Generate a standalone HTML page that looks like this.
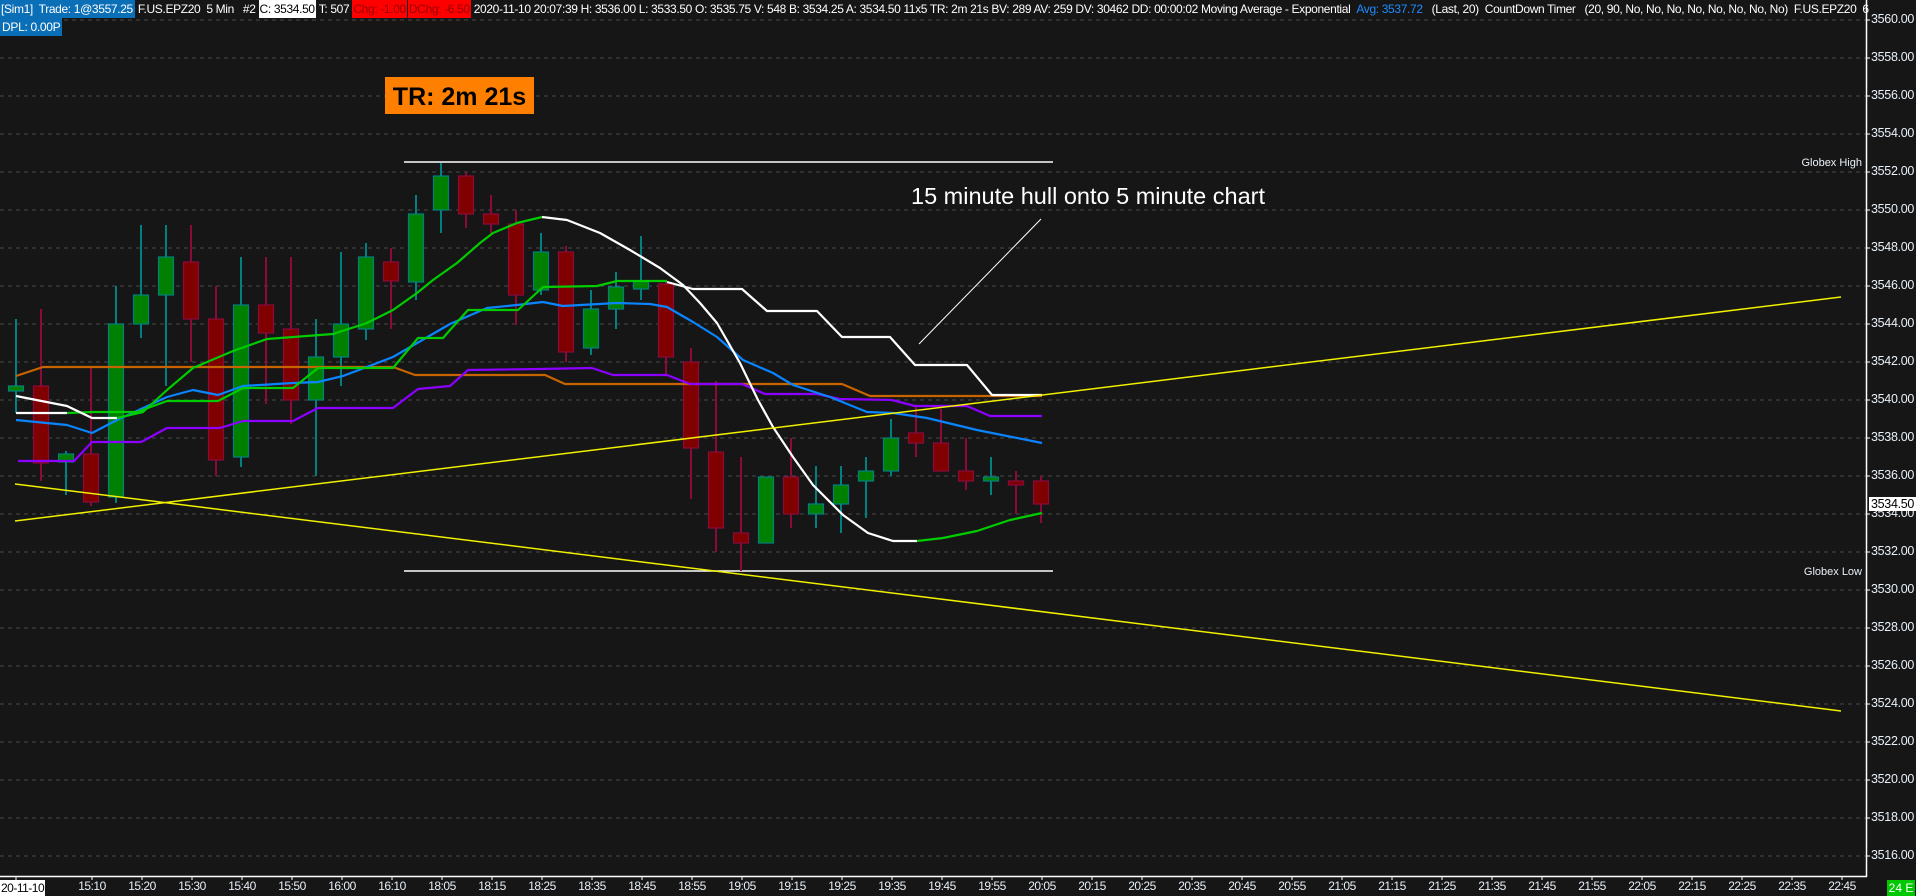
<!DOCTYPE html>
<html><head><meta charset="utf-8"><style>
html,body{margin:0;padding:0;background:#161616;width:1916px;height:896px;overflow:hidden;font-family:"Liberation Sans",sans-serif}
#hdr{position:absolute;left:0;top:0;height:18px;width:1916px;white-space:nowrap;overflow:hidden;font-size:12px;line-height:18px;color:#fff;letter-spacing:-0.35px}
#hdr span{display:inline-block}
#dpl{position:absolute;left:0;top:18px;height:18px;line-height:18px;font-size:12px;color:#fff;background:#0a6fb7;padding:0 2px;letter-spacing:-0.3px}
.pl{position:absolute;left:1871px;font-size:12.5px;color:#e8f0f8;letter-spacing:-0.3px}
.tl{position:absolute;top:879px;font-size:12px;color:#e8f0f8;letter-spacing:-0.5px;transform:translateX(-50%)}
</style></head><body>
<svg width="1916" height="896" style="position:absolute;left:0;top:0">
<g stroke="#4a4a4a" stroke-width="1" stroke-dasharray="4,4">
<line x1="0" y1="20" x2="1866" y2="20"/><line x1="0" y1="58" x2="1866" y2="58"/><line x1="0" y1="96" x2="1866" y2="96"/><line x1="0" y1="134" x2="1866" y2="134"/><line x1="0" y1="172" x2="1866" y2="172"/><line x1="0" y1="210" x2="1866" y2="210"/><line x1="0" y1="248" x2="1866" y2="248"/><line x1="0" y1="286" x2="1866" y2="286"/><line x1="0" y1="324" x2="1866" y2="324"/><line x1="0" y1="362" x2="1866" y2="362"/><line x1="0" y1="400" x2="1866" y2="400"/><line x1="0" y1="438" x2="1866" y2="438"/><line x1="0" y1="476" x2="1866" y2="476"/><line x1="0" y1="514" x2="1866" y2="514"/><line x1="0" y1="552" x2="1866" y2="552"/><line x1="0" y1="590" x2="1866" y2="590"/><line x1="0" y1="628" x2="1866" y2="628"/><line x1="0" y1="666" x2="1866" y2="666"/><line x1="0" y1="704" x2="1866" y2="704"/><line x1="0" y1="742" x2="1866" y2="742"/><line x1="0" y1="780" x2="1866" y2="780"/><line x1="0" y1="818" x2="1866" y2="818"/><line x1="0" y1="856" x2="1866" y2="856"/>
</g>
<!-- Globex lines -->
<line x1="404" y1="162" x2="1053" y2="162" stroke="#fff" stroke-width="1.5"/>
<line x1="404" y1="571" x2="1053" y2="571" stroke="#fff" stroke-width="1.5"/>
<!-- candles -->
<g stroke-width="2">
<g stroke="#008080">
<line x1="16" y1="319" x2="16" y2="413"/><line x1="66" y1="451" x2="66" y2="495"/><line x1="116" y1="286" x2="116" y2="503"/><line x1="141" y1="225" x2="141" y2="338"/><line x1="166" y1="225" x2="166" y2="386"/><line x1="241" y1="257" x2="241" y2="467"/><line x1="316" y1="319" x2="316" y2="476"/><line x1="341" y1="252" x2="341" y2="386"/><line x1="366" y1="243" x2="366" y2="340"/><line x1="416" y1="195" x2="416" y2="300"/><line x1="441" y1="163" x2="441" y2="233"/><line x1="541" y1="233" x2="541" y2="295"/><line x1="591" y1="290" x2="591" y2="355"/><line x1="616" y1="272" x2="616" y2="329"/><line x1="641" y1="236" x2="641" y2="300"/><line x1="766" y1="477" x2="766" y2="543"/><line x1="816" y1="466" x2="816" y2="528"/><line x1="841" y1="466" x2="841" y2="533"/><line x1="866" y1="457" x2="866" y2="518"/><line x1="891" y1="419" x2="891" y2="476"/><line x1="991" y1="457" x2="991" y2="495"/>
</g>
<g stroke="#8b0a3c">
<line x1="41" y1="309" x2="41" y2="481"/><line x1="91" y1="367" x2="91" y2="506"/><line x1="191" y1="225" x2="191" y2="362"/><line x1="216" y1="286" x2="216" y2="476"/><line x1="266" y1="257" x2="266" y2="404"/><line x1="291" y1="257" x2="291" y2="424"/><line x1="391" y1="248" x2="391" y2="329"/><line x1="466" y1="172" x2="466" y2="228"/><line x1="491" y1="195" x2="491" y2="233"/><line x1="516" y1="210" x2="516" y2="325"/><line x1="566" y1="246" x2="566" y2="362"/><line x1="666" y1="282" x2="666" y2="374"/><line x1="691" y1="348" x2="691" y2="499"/><line x1="716" y1="381" x2="716" y2="552"/><line x1="741" y1="457" x2="741" y2="571"/><line x1="791" y1="438" x2="791" y2="528"/><line x1="916" y1="407" x2="916" y2="457"/><line x1="941" y1="409" x2="941" y2="471"/><line x1="966" y1="438" x2="966" y2="490"/><line x1="1016" y1="471" x2="1016" y2="514"/><line x1="1041" y1="476" x2="1041" y2="523"/>
</g>
</g>
<g fill="#008000" stroke="#008080" stroke-width="1.2">
<rect x="8.5" y="386" width="15" height="5"/><rect x="58.5" y="454" width="15" height="8"/><rect x="108.5" y="324" width="15" height="173"/><rect x="133.5" y="295" width="15" height="29"/><rect x="158.5" y="257" width="15" height="38"/><rect x="233.5" y="305" width="15" height="152"/><rect x="308.5" y="357" width="15" height="43"/><rect x="333.5" y="324" width="15" height="33"/><rect x="358.5" y="257" width="15" height="72"/><rect x="408.5" y="214" width="15" height="68"/><rect x="433.5" y="176" width="15" height="34"/><rect x="533.5" y="252" width="15" height="38"/><rect x="583.5" y="309" width="15" height="39"/><rect x="608.5" y="287" width="15" height="22"/><rect x="633.5" y="281" width="15" height="8"/><rect x="758.5" y="477" width="15" height="66"/><rect x="808.5" y="504" width="15" height="10"/><rect x="833.5" y="485" width="15" height="19"/><rect x="858.5" y="471" width="15" height="10"/><rect x="883.5" y="438" width="15" height="33"/><rect x="983.5" y="477" width="15" height="4"/>
</g>
<g fill="#800000" stroke="#8b0a3c" stroke-width="1.2">
<rect x="33.5" y="386" width="15" height="77"/><rect x="83.5" y="454" width="15" height="48"/><rect x="183.5" y="262" width="15" height="57"/><rect x="208.5" y="319" width="15" height="141"/><rect x="258.5" y="305" width="15" height="28"/><rect x="283.5" y="329" width="15" height="71"/><rect x="383.5" y="262" width="15" height="19"/><rect x="458.5" y="176" width="15" height="38"/><rect x="483.5" y="214" width="15" height="10"/><rect x="508.5" y="224" width="15" height="71"/><rect x="558.5" y="252" width="15" height="100"/><rect x="658.5" y="284" width="15" height="73"/><rect x="683.5" y="362" width="15" height="86"/><rect x="708.5" y="452" width="15" height="76"/><rect x="733.5" y="533" width="15" height="10"/><rect x="783.5" y="477" width="15" height="37"/><rect x="908.5" y="433" width="15" height="10"/><rect x="933.5" y="443" width="15" height="28"/><rect x="958.5" y="471" width="15" height="10"/><rect x="1008.5" y="481" width="15" height="4"/><rect x="1033.5" y="481" width="15" height="23"/>
</g>
<!-- indicator lines -->
<g fill="none" stroke-width="2.2" stroke-linejoin="round">
<polyline stroke="#c86400" points="16,376 43,367 393,367 415,375 545,375 565,384 842,384 870,396 1042,396"/>
<polyline stroke="#8c00ff" points="18,461 74,461 92,442 141,442 145,440 167,428 220,428 243,421 293,421 318,408 393,408 418,389 450,386 468,370 540,369 592,368 613,375 667,375 690,384 742,384 765,394 817,394 840,399 892,400 915,406 967,406 990,416 1042,416"/>
<polyline stroke="#0a84ff" points="16,420 67,425 92,433 117,420 167,397 193,390 218,395 243,386 293,383 318,382 343,376 393,357 450,324 487,308 517,305 543,302 563,306 617,303 650,304 667,307 693,322 717,337 743,360 773,373 793,385 830,397 867,412 893,413 927,418 977,430 1042,443"/>
<polyline stroke="#00cc00" points="67,413 93,412 137,412 167,401 218,401 243,388 293,388 318,368 393,368 418,338 443,338 450,330 468,310 518,310 543,287 597,286 617,281 667,281"/>
<polyline stroke="#fff" points="667,282 693,289 742,289 767,311 817,311 842,337 890,337 915,365 967,365 992,395 1042,395"/>
<polyline stroke="#fff" points="16,413 67,413"/>
<polyline stroke="#fff" points="16,396 67,406 92,418 117,418"/>
<polyline stroke="#00cc00" points="117,418 143,412 167,390 193,368 233,351 267,339 333,334 367,323 393,310 417,293 433,280 457,263 480,243 493,233 517,223 542,217"/>
<polyline stroke="#fff" points="542,217 567,220 600,233 630,250 660,268 683,285 700,303 717,323 740,363 758,400 773,427 793,457 813,485 843,515 868,533 893,541 917,541"/>
<polyline stroke="#00cc00" points="917,541 943,538 977,531 1010,520 1042,513"/>
</g>
<line x1="15" y1="521" x2="1841" y2="297" stroke="#f0f000" stroke-width="1.5"/>
<line x1="15" y1="484" x2="1841" y2="711" stroke="#f0f000" stroke-width="1.5"/>
<line x1="1041" y1="219" x2="919" y2="344" stroke="#fff" stroke-width="1"/>
<!-- axes -->
<line x1="1866.5" y1="0" x2="1866.5" y2="877" stroke="#fff" stroke-width="1.5"/>
<line x1="0" y1="876.5" x2="1867" y2="876.5" stroke="#fff" stroke-width="1.5"/>
<g stroke="#fff" stroke-width="1">
<line x1="1866" y1="20" x2="1870" y2="20"/><line x1="1866" y1="58" x2="1870" y2="58"/><line x1="1866" y1="96" x2="1870" y2="96"/><line x1="1866" y1="134" x2="1870" y2="134"/><line x1="1866" y1="172" x2="1870" y2="172"/><line x1="1866" y1="210" x2="1870" y2="210"/><line x1="1866" y1="248" x2="1870" y2="248"/><line x1="1866" y1="286" x2="1870" y2="286"/><line x1="1866" y1="324" x2="1870" y2="324"/><line x1="1866" y1="362" x2="1870" y2="362"/><line x1="1866" y1="400" x2="1870" y2="400"/><line x1="1866" y1="438" x2="1870" y2="438"/><line x1="1866" y1="476" x2="1870" y2="476"/><line x1="1866" y1="514" x2="1870" y2="514"/><line x1="1866" y1="552" x2="1870" y2="552"/><line x1="1866" y1="590" x2="1870" y2="590"/><line x1="1866" y1="628" x2="1870" y2="628"/><line x1="1866" y1="666" x2="1870" y2="666"/><line x1="1866" y1="704" x2="1870" y2="704"/><line x1="1866" y1="742" x2="1870" y2="742"/><line x1="1866" y1="780" x2="1870" y2="780"/><line x1="1866" y1="818" x2="1870" y2="818"/><line x1="1866" y1="856" x2="1870" y2="856"/>
<line x1="16" y1="876" x2="16" y2="880"/><line x1="92" y1="876" x2="92" y2="880"/><line x1="142" y1="876" x2="142" y2="880"/><line x1="192" y1="876" x2="192" y2="880"/><line x1="242" y1="876" x2="242" y2="880"/><line x1="292" y1="876" x2="292" y2="880"/><line x1="342" y1="876" x2="342" y2="880"/><line x1="392" y1="876" x2="392" y2="880"/><line x1="442" y1="876" x2="442" y2="880"/><line x1="492" y1="876" x2="492" y2="880"/><line x1="542" y1="876" x2="542" y2="880"/><line x1="592" y1="876" x2="592" y2="880"/><line x1="642" y1="876" x2="642" y2="880"/><line x1="692" y1="876" x2="692" y2="880"/><line x1="742" y1="876" x2="742" y2="880"/><line x1="792" y1="876" x2="792" y2="880"/><line x1="842" y1="876" x2="842" y2="880"/><line x1="892" y1="876" x2="892" y2="880"/><line x1="942" y1="876" x2="942" y2="880"/><line x1="992" y1="876" x2="992" y2="880"/><line x1="1042" y1="876" x2="1042" y2="880"/><line x1="1092" y1="876" x2="1092" y2="880"/><line x1="1142" y1="876" x2="1142" y2="880"/><line x1="1192" y1="876" x2="1192" y2="880"/><line x1="1242" y1="876" x2="1242" y2="880"/><line x1="1292" y1="876" x2="1292" y2="880"/><line x1="1342" y1="876" x2="1342" y2="880"/><line x1="1392" y1="876" x2="1392" y2="880"/><line x1="1442" y1="876" x2="1442" y2="880"/><line x1="1492" y1="876" x2="1492" y2="880"/><line x1="1542" y1="876" x2="1542" y2="880"/><line x1="1592" y1="876" x2="1592" y2="880"/><line x1="1642" y1="876" x2="1642" y2="880"/><line x1="1692" y1="876" x2="1692" y2="880"/><line x1="1742" y1="876" x2="1742" y2="880"/><line x1="1792" y1="876" x2="1792" y2="880"/><line x1="1842" y1="876" x2="1842" y2="880"/>
</g>
<rect x="385" y="77" width="149" height="37" fill="#ff8000"/>
<text x="459.5" y="105" text-anchor="middle" font-family="Liberation Sans, sans-serif" font-weight="bold" font-size="25" fill="#000">TR: 2m 21s</text>
<text x="911" y="204" font-family="Liberation Sans, sans-serif" font-size="23.5" fill="#fff">15 minute hull onto 5 minute chart</text>
<text x="1862" y="166" text-anchor="end" font-family="Liberation Sans, sans-serif" font-size="11" fill="#e8f0f8">Globex High</text>
<text x="1862" y="575" text-anchor="end" font-family="Liberation Sans, sans-serif" font-size="11" fill="#e8f0f8">Globex Low</text>
</svg>

<div id="hdr"><span style="background:#0a6fb7;padding:0 2px 0 1px">[Sim1]&nbsp; Trade: 1@3557.25</span>&nbsp;F.US.EPZ20&nbsp; 5 Min&nbsp;&nbsp; #2&nbsp;<span style="background:#fff;color:#000;padding:0 1px">C: 3534.50</span>&nbsp;T: 507&nbsp;<span style="background:#f00;color:#900;padding:0 1px">Chg: -1.00</span><span style="background:#f00;color:#900;padding:0 1px;margin-left:1px">DChg: -6.50</span>&nbsp;2020-11-10 20:07:39 H: 3536.00 L: 3533.50 O: 3535.75 V: 548 B: 3534.25 A: 3534.50 11x5 TR: 2m 21s BV: 289 AV: 259 DV: 30462 DD: 00:00:02 Moving Average - Exponential&nbsp; <span style="color:#1e8cff">Avg: 3537.72</span>&nbsp;&nbsp; (Last, 20)&nbsp; CountDown Timer&nbsp;&nbsp; (20, 90, No, No, No, No, No, No, No, No)&nbsp; F.US.EPZ20&nbsp; 6</div>
<div id="dpl">DPL: 0.00P</div>

<div class="pl" style="top:12px">3560.00</div><div class="pl" style="top:50px">3558.00</div><div class="pl" style="top:88px">3556.00</div><div class="pl" style="top:126px">3554.00</div><div class="pl" style="top:164px">3552.00</div><div class="pl" style="top:202px">3550.00</div><div class="pl" style="top:240px">3548.00</div><div class="pl" style="top:278px">3546.00</div><div class="pl" style="top:316px">3544.00</div><div class="pl" style="top:354px">3542.00</div><div class="pl" style="top:392px">3540.00</div><div class="pl" style="top:430px">3538.00</div><div class="pl" style="top:468px">3536.00</div><div class="pl" style="top:506px">3534.00</div><div class="pl" style="top:544px">3532.00</div><div class="pl" style="top:582px">3530.00</div><div class="pl" style="top:620px">3528.00</div><div class="pl" style="top:658px">3526.00</div><div class="pl" style="top:696px">3524.00</div><div class="pl" style="top:734px">3522.00</div><div class="pl" style="top:772px">3520.00</div><div class="pl" style="top:810px">3518.00</div><div class="pl" style="top:848px">3516.00</div>
<div class="pl" style="top:497px;left:1869px;background:#fff;color:#000;padding:0 2px;line-height:14px">3534.50</div>

<div style="position:absolute;left:0;top:880px;height:16px;line-height:16px;background:#fff;color:#000;font-size:12px;padding:0 1px;letter-spacing:-0.5px">20-11-10</div>
<div class="tl" style="left:92px">15:10</div><div class="tl" style="left:142px">15:20</div><div class="tl" style="left:192px">15:30</div><div class="tl" style="left:242px">15:40</div><div class="tl" style="left:292px">15:50</div><div class="tl" style="left:342px">16:00</div><div class="tl" style="left:392px">16:10</div><div class="tl" style="left:442px">18:05</div><div class="tl" style="left:492px">18:15</div><div class="tl" style="left:542px">18:25</div><div class="tl" style="left:592px">18:35</div><div class="tl" style="left:642px">18:45</div><div class="tl" style="left:692px">18:55</div><div class="tl" style="left:742px">19:05</div><div class="tl" style="left:792px">19:15</div><div class="tl" style="left:842px">19:25</div><div class="tl" style="left:892px">19:35</div><div class="tl" style="left:942px">19:45</div><div class="tl" style="left:992px">19:55</div><div class="tl" style="left:1042px">20:05</div><div class="tl" style="left:1092px">20:15</div><div class="tl" style="left:1142px">20:25</div><div class="tl" style="left:1192px">20:35</div><div class="tl" style="left:1242px">20:45</div><div class="tl" style="left:1292px">20:55</div><div class="tl" style="left:1342px">21:05</div><div class="tl" style="left:1392px">21:15</div><div class="tl" style="left:1442px">21:25</div><div class="tl" style="left:1492px">21:35</div><div class="tl" style="left:1542px">21:45</div><div class="tl" style="left:1592px">21:55</div><div class="tl" style="left:1642px">22:05</div><div class="tl" style="left:1692px">22:15</div><div class="tl" style="left:1742px">22:25</div><div class="tl" style="left:1792px">22:35</div><div class="tl" style="left:1842px">22:45</div>
<div style="position:absolute;left:1887px;top:880px;width:28px;height:16px;line-height:16px;background:#00c800;color:#fff;font-size:12px;text-align:center">24 E</div>
</body></html>
